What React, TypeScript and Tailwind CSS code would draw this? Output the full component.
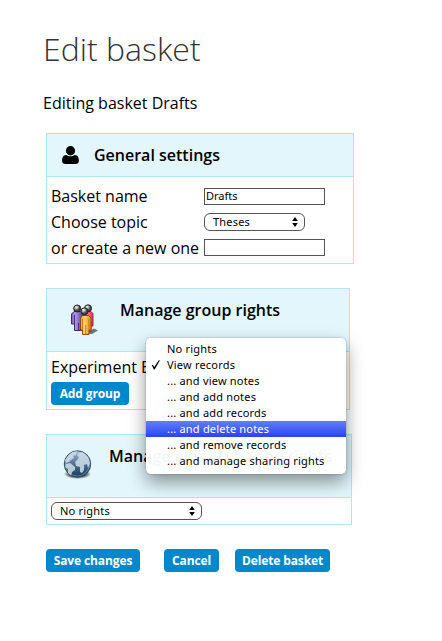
import React from "react";

const rights = [
  "No rights",
  "View records",
  "... and view notes",
  "... and add notes",
  "... and add records",
  "... and delete notes",
  "... and remove records",
  "... and manage sharing rights",
];

function Arrows() {
  return (
    <svg width="6" height="10" viewBox="0 0 6 10" className="shrink-0">
      <path d="M3 0 5.8 4H.2ZM3 10 .2 6h5.600Z" fill="#000" />
    </svg>
  );
}

function Select({ label, className }: { label: string; className: string }) {
  return (
    <div
      className={
        "flex h-[18px] items-center justify-between rounded-[6px] border border-[#555] bg-white pr-[6px] pl-2 font-['Noto_Sans',sans-serif] text-[11px] leading-4 tracking-[0.2px] " +
        className
      }
    >
      <span>{label}</span>
      <Arrows />
    </div>
  );
}

function Button({ children, className }: { children: React.ReactNode; className: string }) {
  return (
    <button
      className={
        "flex h-[23px] items-center justify-center rounded-[4px] bg-[#0088cc] text-[12px] leading-none font-bold tracking-[-0.12px] whitespace-nowrap text-white " +
        className
      }
    >
      {children}
    </button>
  );
}

function UserIcon() {
  return (
    <svg width="17" height="18" viewBox="0 0 17 18">
      <path
        d="M4.200 8.900C1 9.100.1 11.500.1 14.800.1 16.900 1.300 18 3.400 18h10.200c2.100 0 3.300-1.100 3.300-3.200 0-3.300-.9-5.700-4.100-5.900-2.500 1.900-6.100 1.900-8.600 0Z"
        fill="#000"
      />
      <ellipse cx="8.500" cy="4.800" rx="4.600" ry="4.700" fill="#000" />
    </svg>
  );
}

function GroupIcon() {
  return (
    <svg width="32" height="34" viewBox="0 0 32 34">
      <defs>
        <linearGradient id="purple">
          <stop offset="0" stopColor="#7b5cc0" />
          <stop offset=".35" stopColor="#ab94e4" />
          <stop offset="1" stopColor="#57369d" />
        </linearGradient>
        <linearGradient id="orange">
          <stop offset="0" stopColor="#f4a41c" />
          <stop offset=".4" stopColor="#ffd269" />
          <stop offset="1" stopColor="#e98b12" />
        </linearGradient>
        <linearGradient id="pink">
          <stop offset="0" stopColor="#ffa0a8" />
          <stop offset="1" stopColor="#d9345b" />
        </linearGradient>
        <radialGradient id="head" cx=".35" cy=".3">
          <stop offset="0" stopColor="#fff" />
          <stop offset=".5" stopColor="#aaa" />
          <stop offset="1" stopColor="#444" />
        </radialGradient>
      </defs>
      <path d="m18 27 5-2.500 4 2-6 3.500H11l3-3Z" fill="#555" opacity=".8" />
      <path d="M.5 10 3 7.500h6.500L12 10v16.500H3.500V20h-3Z" fill="url(#purple)" stroke="#3d2670" />
      <path d="M3.500 11v9M7.500 19v7.500" stroke="#4a2f86" />
      <path d="m13 9.500 2-2h5l2 2V22h-2v5.500h-7Z" fill="url(#pink)" stroke="#a32748" />
      <path d="m9.500 14 2-2.500h6l2.500 2.500v12h-2v4.500h-6.500V26h-2Z" fill="url(#orange)" stroke="#8d4a10" />
      <path d="M11.500 15v11M18 15v11M14.700 21v9" stroke="#c0700f" strokeWidth=".8" />
      <circle cx="6.200" cy="4.500" r="3.500" fill="url(#head)" stroke="#222" />
      <circle cx="17" cy="4.300" r="3.500" fill="url(#head)" stroke="#222" />
      <circle cx="13.500" cy="7.300" r="3.500" fill="url(#head)" stroke="#222" />
    </svg>
  );
}

function GlobeIcon() {
  return (
    <svg width="32" height="32" viewBox="0 0 32 32">
      <defs>
        <linearGradient id="sea" x2="0" y2="1">
          <stop offset="0" stopColor="#9fb6c9" />
          <stop offset=".5" stopColor="#4f7294" />
          <stop offset="1" stopColor="#143a5f" />
        </linearGradient>
        <radialGradient id="shade">
          <stop offset=".5" stopColor="#000" stopOpacity=".85" />
          <stop offset="1" stopColor="#000" stopOpacity="0" />
        </radialGradient>
        <clipPath id="disc">
          <circle cx="14.500" cy="15" r="13" />
        </clipPath>
      </defs>
      <ellipse cx="14.500" cy="25" rx="13.500" ry="5" fill="url(#shade)" />
      <circle cx="14.500" cy="15" r="13.200" fill="url(#sea)" stroke="#374d62" />
      <g clipPath="url(#disc)" fill="#d0dee8" opacity=".85">
        <path d="m2 11 3-4 4-4 5-1-1 4-3 1 1 2-3 2-2 2-3 1Z" />
        <path d="m3 15 4-1 5 4v3l-3 2-1 4-3-2v-5l-3-2Z" />
        <path d="m15 4 5-1 5 5 2 6-2 5-1-4-3 1v5l-2 3-2-1v-5l-4-1-1-4 3-3 1-2-2-1Z" />
      </g>
      <circle cx="14.500" cy="15" r="12" fill="none" stroke="#cfe0eb" strokeOpacity=".35" />
    </svg>
  );
}

function RightsMenu() {
  return (
    <ul className="absolute top-[338px] left-[146px] z-10 h-[136px] w-[200px] rounded-[5px] bg-white/[0.965] pt-[3px] font-['Noto_Sans',sans-serif] text-[11px] tracking-[0.2px] shadow-[0_8px_18px_rgba(0,0,0,0.42),0_0_2px_rgba(0,0,0,0.3)]">
      {rights.map((label, i) => (
        <li
          key={label}
          className={
            "flex h-4 items-center leading-4 whitespace-nowrap" +
            (i === 5 ? " bg-linear-to-b from-[#647cf6] to-[#2c40f5] text-white" : " text-black")
          }
        >
          <span className="flex w-[21px] pl-[5px]">
            {i === 1 && (
              <svg width="10" height="10" viewBox="0 0 10 10">
                <path d="M.8 5.200 2 5l1.300 2L7.600.6 9 .2 3.700 9.600H2.900Z" fill="#000" />
              </svg>
            )}
          </span>
          {label}
        </li>
      ))}
    </ul>
  );
}

export default function App() {
  return (
    <main className="relative h-[641px] w-[442px] overflow-hidden bg-white pl-[46px] font-['Open_Sans',sans-serif] text-base text-black">
      <h1 className="-ml-[3px] pt-[27px] text-[32px] leading-[44px] font-light text-[#333]">Edit basket</h1>
      <p className="mt-5 -ml-[3px] h-[42px] leading-6">Editing basket Drafts</p>

      <section className="h-[131px] w-[308px] border border-[#b5e3f5]">
        <header className="flex h-[43px] items-center border-b border-[#b5e3f5] bg-[#e2f6fc] pl-[15px]">
          <UserIcon />
          <h2 className="ml-[15px] font-semibold">General settings</h2>
        </header>
        <div className="grid auto-rows-[26px] grid-cols-[153px_1fr] items-center pt-[6px] pl-1 leading-6 whitespace-nowrap">
          <span>Basket name</span>
          <div className="flex h-[17px] w-[121px] items-center border border-[#555] pl-px font-['Noto_Sans',sans-serif] text-[11px]">
            Drafts
          </div>
          <span>Choose topic</span>
          <Select label="Theses" className="w-[101px]" />
          <span>or create a new one</span>
          <div className="-mt-px h-[17px] w-[121px] border border-[#555]" />
        </div>
      </section>

      <section className="mt-6 h-[122px] w-[304px] border border-[#b5e3f5]">
        <header className="flex h-[63px] items-start border-b border-[#b5e3f5] bg-[#e2f6fc] pt-[9px] pl-6">
          <div className="pt-[6px]">
            <GroupIcon />
          </div>
          <h2 className="ml-[17px] font-semibold">Manage group rights</h2>
        </header>
        <div className="pt-[3px] pl-1">
          <p className="leading-6 whitespace-nowrap">Experiment E</p>
          <Button className="mt-[3px] w-[78px]">Add group</Button>
        </div>
      </section>

      <section className="mt-6 h-[91px] w-[306px] border border-[#b5e3f5]">
        <header className="flex h-[63px] items-start border-b border-[#b5e3f5] bg-[#e2f6fc] pt-[9px] pl-4">
          <div className="pt-[5px]">
            <GlobeIcon />
          </div>
          <h2 className="ml-[14px] font-semibold whitespace-nowrap">Manage global sharing rights</h2>
        </header>
        <div className="pt-1 pl-1">
          <Select label="No rights" className="w-[151px]" />
        </div>
      </section>

      <div className="mt-6 flex">
        <Button className="w-[94px]">Save changes</Button>
        <Button className="ml-6 w-[55px]">Cancel</Button>
        <Button className="ml-4 w-[95px]">Delete basket</Button>
      </div>

      <RightsMenu />
    </main>
  );
}
